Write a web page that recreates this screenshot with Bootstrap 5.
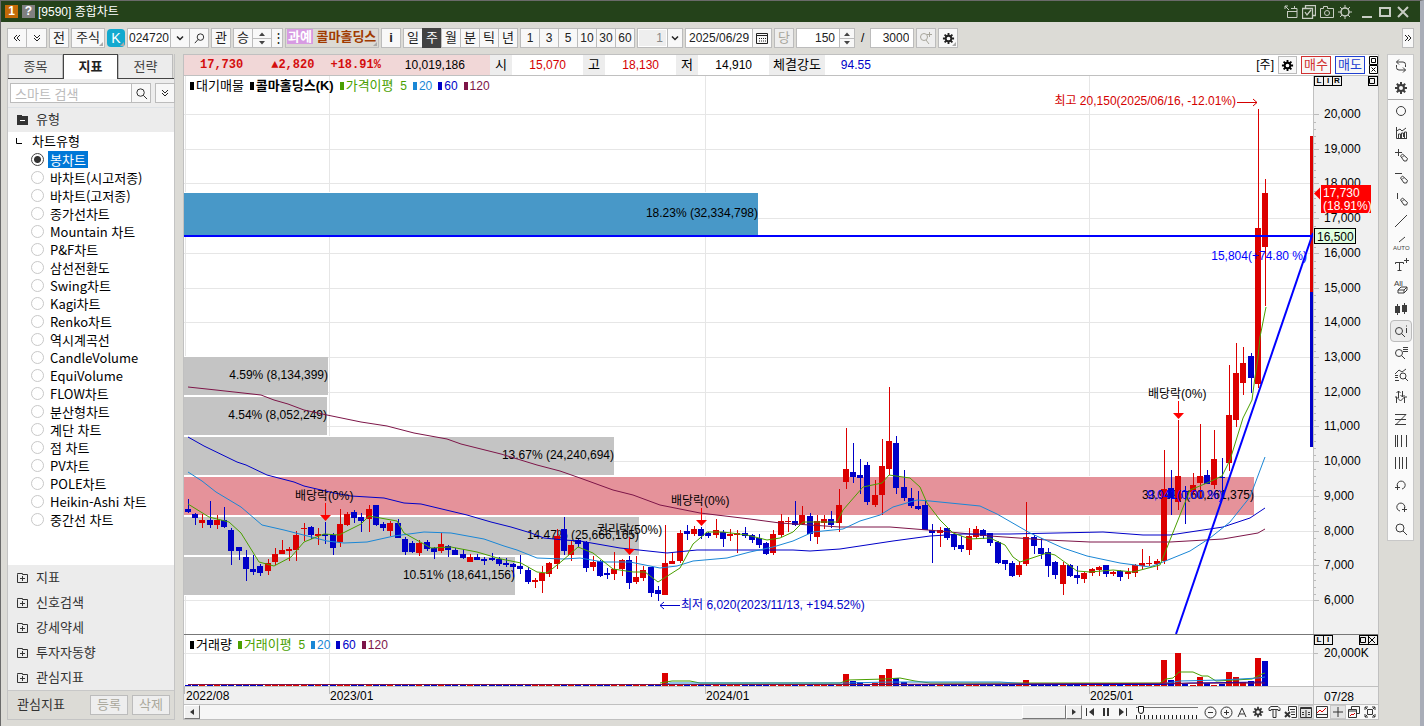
<!DOCTYPE html>
<html lang="ko">
<head>
<meta charset="utf-8">
<meta name="viewport" content="width=device-width, initial-scale=1">
<title>[9590] 종합차트</title>
<link href="https://cdn.jsdelivr.net/npm/bootstrap@5.3.0/dist/css/bootstrap.min.css" rel="stylesheet">
<style>
:root{--line:#bcbcbc;--face:#f8f8f8;--panel:#dcdbd6;--ink:#3c3c3c}
body{background:var(--panel);font:12px/18px "Liberation Sans","Noto Sans CJK KR",sans-serif;color:#000}
.app{min-height:100vh;border-left:1px solid #6a6a6a;border-top:1px solid #6a6a6a;border-right:4px solid #a9adb8;overflow:hidden}
svg{display:block;flex:none}
button{font:inherit;color:inherit}
.ico{fill:none;stroke:currentColor;stroke-width:1}
.solid{fill:currentColor;stroke:none}
.titlebar{height:21px;background:#24421a;color:#fff;font-size:12px;padding:0 8px 0 4px}
.titlebar .sq{width:13px;height:13px;background:#c46a08;font:bold 12px/13px "Liberation Sans",sans-serif;text-align:center}
.titlebar .sq.q{background:#808080}
.titlebar button{border:0;background:none;padding:0;color:#c8cdc4;width:18px;height:18px;display:grid;place-items:center}
.titlebar .ttl{margin-left:-1px}
.toolbar{height:32px;padding:0 6px;gap:2px}
.tb{height:20px;min-width:20px;padding:0;background:var(--face);border:1px solid var(--line);display:grid;place-items:center;font-size:13px;line-height:16px;position:relative;color:#222;white-space:nowrap}
.tb.dg{font-size:12px}
.join>*+*{margin-left:-1px}
.corner::after{content:"";position:absolute;right:1px;bottom:1px;border:2px solid transparent;border-right-color:#aaa;border-bottom-color:#aaa}
.tb.on{background:#424242;color:#fff;border-color:#424242}
.tb.off{background:#eee;color:#a8a69c}
.tb.w34{width:34px}.tb.w12{width:12px;min-width:12px}.tb.w16{width:16px;min-width:16px}.tb.w21{width:21px}
.num{height:20px;border:1px solid var(--line);background:#fff;padding:0 1px;font:12px/16px "Liberation Sans",sans-serif;color:#222;border-radius:0}
.num.a{width:44px}.num.b{width:68px;padding-left:3px}.num.c{width:31px;background:#eee;color:#888;box-shadow:inset 0 0 0 1px #fff}
.num.r{text-align:right;padding-right:4px}
.spin{width:16px;height:20px;border:1px solid var(--line);background:var(--face)}
.spin.wide{width:20px}
.spin button{border:0;background:none;height:9px;padding:0;display:grid;place-items:center;width:100%;color:#444}
.spin button+button{border-top:1px solid var(--line)}
.kbtn{width:18px;height:18px;border:0;border-radius:4px;background:#12a9cf;color:#fff;padding:0;font-size:14px;line-height:18px;position:relative}
.stock{width:94px;height:20px;border:1px solid var(--line);background:#dcdad4;padding:0 1px;color:#a03a00;font-weight:700;font-size:13px;line-height:16px;overflow:hidden;white-space:nowrap;position:relative}
.stock span{background:#d79be2;color:#fff;padding:0 1px}
.body{padding-left:6px}
.side{width:168px;background:#fff;border:1px solid #c4c4c4;border-top:0}
.tabsrow{height:25px;border-bottom:1px solid #444;background:var(--panel)}
.tabsrow button{width:55px;height:24px;border:1px solid var(--line);border-bottom:0;background:#ececec;color:#444;font-size:13px;padding:0}
.tabsrow button.act{background:#fff;border-color:#444;height:25px;font-weight:700;color:#222}
.find{padding:4px 2px;background:#ededed}
.find input{height:20px;border:1px solid var(--line);padding:0 4px;min-width:0;width:122px;font:13px "Noto Sans CJK KR",sans-serif}
.find input::placeholder{color:#bbb;opacity:1}
.grp{height:25px;background:#ececec;padding:0 9px;font-size:13px;color:#333;border:0;width:100%;text-align:left;gap:7px}
.tree{font-family:"Noto Sans CJK KR",sans-serif;height:433px;font-size:13px}
.tree .root{height:18px;padding-left:8px;gap:10px}
.tree .item{height:18px;padding-left:23px;gap:4px}
.tree input{appearance:none;width:13px;height:13px;margin:0;border:1px solid #c8c8c8;border-radius:50%;background:#fff}
.tree input:checked{border-color:#444;background:radial-gradient(#333 0 3px,#fff 4px)}
.tree label{padding:0 2px;line-height:17px;white-space:nowrap}
.tree input:checked+label{background:#0078d7;color:#fff}
.foot{height:29px;background:var(--panel);border-top:1px solid #c8c8c8;padding:0 4px 0 9px;font-size:13px;color:#333}
.foot button{width:38px;height:20px;border:1px solid var(--line);background:#eee;color:#aaa89c;padding:0;line-height:16px}
.main{min-width:0;border:1px solid #c0c0c0;border-bottom:0;background:#fff}
.quote{height:21px;border-bottom:1px solid #c0c0c0;font-size:12px;line-height:20px;white-space:nowrap}
.quote .pink{width:306px;background:#f1d7d7}
.boldnum{font:bold 12px/20px "Liberation Mono",monospace;color:#d40d0d}
.lab{background:#ededed;min-width:22px;padding:0 4px;font-size:13px;text-align:center}
.val{width:71px;text-align:right;padding-right:17px}
.red{color:#d40000}.blu{color:#0000c8}.grn{color:#4a9f00}.sky{color:#1a87d6}.wine{color:#7d1548}
.quote button{height:18px;border:1px solid var(--line);background:var(--face);padding:0 2px;font-size:13px;line-height:14px}
.quote .buy{color:#d03030;border-color:#d03030;width:30px}.quote .sell{color:#1f3fd0;border-color:#1f3fd0;width:30px}
.legend{top:0;left:6px;gap:6px;line-height:20px;white-space:nowrap;font-size:12px}
.legend b,.legend .ko{font-size:13px}
.legend i{display:inline-block;width:4px;height:8px;background:currentColor;margin-right:2px}
.axis{width:65px;background:#f0f0f0;border-left:1px solid #c0c0c0}
.plot{min-width:0}
.plot svg,.axis svg{width:100%}
.ph{height:558px}.vh{height:51px}
.volrow{border-top:1px solid #777}
.tiny{border:1px solid #000;background:#f0f0f0;width:10px;height:10px;padding:0;font:bold 8px/8px "Liberation Sans",sans-serif;display:grid;place-items:center}
.tiny+.tiny{margin-left:-1px}
.dates{height:18px;background:#f0f0f0;border-top:1px solid #c0c0c0}
.scroller{height:16px;border-top:1px solid #c0c0c0;border-bottom:1px solid #c0c0c0;background:#f8f8f8}
.scroller>button{width:16px;height:14px;border:0;background:none;padding:0;display:grid;place-items:center;color:#333}
.scroller>.bev,.thumb{background:#f0f0f0;border:1px solid #fff;border-right-color:#777;border-bottom-color:#777}
.thumb{width:44px;height:14px}
.scroller>.sel{background:#e4e4e4;box-shadow:inset 0 0 0 1px #c8c8c8}
.track{background:#f6f6f6}
.zoomer{width:62px;height:14px;margin:0 4px 0 6px;appearance:none;background:linear-gradient(#777,#777) 0 2px/100% 1px no-repeat,repeating-linear-gradient(90deg,#222 0 1px,transparent 1px 4px) 0 100%/100% 4px no-repeat}
.zoomer::-webkit-slider-thumb{appearance:none;width:6px;height:8px;background:#fff;border:1px solid #111;border-radius:0 0 3px 3px;margin-top:-5px}
.strip{width:27px;background:#fafafa;border:1px solid #c8c8c8;margin:0 6px 0 8px}
.strip button{width:22px;height:22px;border:1px solid transparent;border-radius:4px;background:none;padding:0;display:grid;place-items:center;color:var(--ink);margin:0 auto}
.strip .sel{background:#ececec;border-color:#bbb}
.strip hr{margin:0;border-color:#aaa;opacity:1;height:0;border-width:1px 0 0}
svg text{font-family:"Liberation Sans","Noto Sans CJK KR",sans-serif;font-size:12px}
.grid line{stroke:#e6e6e6}
</style>
</head>
<body>
<svg width="0" height="0" class="position-absolute" aria-hidden="true">
<defs>
<symbol id="gear" viewBox="0 0 14 14"><circle cx="7" cy="7" r="3" fill="none" stroke="currentColor" stroke-width="2"/><path d="M7 1v3M7 10v3M1 7h3M10 7h3M2.8 2.8l2 2M9.2 9.2l2 2M11.2 2.8l-2 2M4.8 9.2l-2 2" stroke="currentColor" stroke-width="2"/></symbol>
<symbol id="mag" viewBox="0 0 14 14"><g fill="none" stroke="currentColor"><circle cx="6" cy="6" r="4"/><path d="M9 9l4 4"/></g></symbol>
<symbol id="magr" viewBox="0 0 14 14"><g fill="none" stroke="currentColor"><circle cx="8" cy="5.500" r="3.500"/><path d="M5.500 8L2 12"/></g></symbol>
<symbol id="chev" viewBox="0 0 10 10"><path d="M2 3.500l3 3 3-3" fill="none" stroke="currentColor" stroke-width="1.500"/></symbol>
<symbol id="dchev" viewBox="0 0 10 10"><path d="M2 2l3 3 3-3M2 5l3 3 3-3" fill="none" stroke="currentColor"/></symbol>
<symbol id="dleft" viewBox="0 0 10 10"><path d="M5 2L2 5l3 3M8 2L5 5l3 3" fill="none" stroke="currentColor"/></symbol>
<symbol id="dright" viewBox="0 0 10 10"><path d="M2 2l3 3-3 3M5 2l3 3-3 3" fill="none" stroke="currentColor"/></symbol>
<symbol id="up" viewBox="0 0 6 4"><path d="M0 4l3-3.500L6 4z" fill="currentColor"/></symbol>
<symbol id="dn" viewBox="0 0 6 4"><path d="M0 0l3 3.500L6 0z" fill="currentColor"/></symbol>
<symbol id="plusf" viewBox="0 0 12 12"><path d="M.5 2.500v8h10v-8h-5v-1h-5zM3 6.500h5M5.500 4v5" fill="none" stroke="currentColor"/></symbol>
</defs>
</svg>

<div class="app d-flex flex-column">
<header class="titlebar d-flex align-items-center gap-1">
  <span class="sq">1</span><span class="sq q">?</span><span class="ttl">[9590] 종합차트</span>
  <div class="ms-auto d-flex">
    <button aria-label="분리"><svg class="ico" width="14" height="14"><path d="M1 1l4 4M1 4V1h3M7 3.500h6v9H3.500V6M3 6.500h10M10.500 1v3"/></svg></button>
    <button aria-label="복사"><svg class="ico" width="14" height="14"><path d="M3.500 3V.5h10v10H11M.5 3.500h10v10H.5zM3 7l2 3 4-5" stroke-width="1.300"/></svg></button>
    <button aria-label="캡처"><svg class="ico" width="14" height="14"><path d="M.5 3.500h3v-2h4v2h6v9H.5z"/><circle cx="7" cy="8" r="2.500"/></svg></button>
    <button aria-label="설정"><svg class="ico" width="14" height="14"><circle cx="7" cy="7" r="4" stroke-width="1.500"/><path d="M7 0v3M7 11v3M0 7h3M11 7h3M2 2l2 2M10 10l2 2M12 2l-2 2M4 10l-2 2"/></svg></button>
  </div>
  <div class="d-flex">
    <button aria-label="최소화"><svg class="ico" width="12" height="14"><path d="M1 12h10" stroke-width="2"/></svg></button>
    <button aria-label="최대화"><svg class="ico" width="12" height="12"><path d="M1 2h10v8H1z" stroke-width="2"/></svg></button>
    <button aria-label="닫기"><svg class="ico" width="12" height="12"><path d="M1 1l10 10M11 1L1 11" stroke-width="2"/></svg></button>
  </div>
</header>

<div class="toolbar d-flex align-items-center">
  <div class="d-flex join"><button class="tb" aria-label="접기"><svg width="10" height="10"><use href="#dleft"/></svg></button><button class="tb w21" aria-label="펼치기"><svg width="10" height="10"><use href="#dchev"/></svg></button></div>
  <button class="tb">전</button>
  <button class="tb w34 corner">주식</button>
  <button class="kbtn corner">K</button>
  <div class="d-flex join"><input class="num a" aria-label="종목코드" value="024720"><button class="tb" aria-label="목록"><svg width="10" height="10"><use href="#chev"/></svg></button><button class="tb" aria-label="종목검색"><svg width="13" height="13"><use href="#magr"/></svg></button></div>
  <button class="tb">관</button>
  <div class="d-flex join"><button class="tb">승</button><div class="spin wide"><button aria-label="이전"><svg width="6" height="4"><use href="#up"/></svg></button><button aria-label="다음"><svg width="6" height="4"><use href="#dn"/></svg></button></div><button class="tb w12" aria-label="더보기">⋮</button></div>
  <div class="stock corner"><span>과예</span> 콜마홀딩스</div>
  <button class="tb fw-bold">i</button>
  <div class="d-flex join"><button class="tb">일</button><button class="tb on">주</button><button class="tb">월</button><button class="tb">분</button><button class="tb">틱</button><button class="tb">년</button></div>
  <div class="d-flex join"><button class="tb dg">1</button><button class="tb dg">3</button><button class="tb dg">5</button><button class="tb dg">10</button><button class="tb dg">30</button><button class="tb dg">60</button></div>
  <div class="d-flex join"><input class="num c r" aria-label="주기" value="1"><button class="tb w16" aria-label="주기 목록"><svg width="10" height="10"><use href="#chev"/></svg></button></div>
  <div class="d-flex join"><input class="num b" aria-label="날짜" value="2025/06/29"><button class="tb" aria-label="달력"><svg class="ico" width="12" height="12"><path d="M.5 1.500h11v10H.5zM.5 3.500h11"/><path d="M3 6.500h7M3 9h7" stroke-dasharray="1 1"/></svg></button></div>
  <button class="tb off">당</button>
  <div class="d-flex join"><input class="num a r" aria-label="봉 개수" value="150"><div class="spin"><button aria-label="증가"><svg width="6" height="4"><use href="#up"/></svg></button><button aria-label="감소"><svg width="6" height="4"><use href="#dn"/></svg></button></div></div>
  <span class="px-1">/</span>
  <input class="num a r" aria-label="전체 개수" value="3000">
  <button class="tb off" aria-label="확대"><svg class="ico" width="14" height="14"><circle cx="5" cy="6" r="3.500"/><path d="M7 9l3 4M8 3.500h5M10.500 1v5"/></svg></button>
  <button class="tb corner" aria-label="차트 설정"><svg width="13" height="13"><use href="#gear"/></svg></button>
  <button class="tb w12 ms-auto" aria-label="더 펼치기"><svg width="10" height="10"><use href="#dright"/></svg></button>
</div>

<div class="body d-flex flex-fill pb-1">
<aside class="side d-flex flex-column flex-shrink-0 align-self-start">
  <div class="tabsrow d-flex"><button>종목</button><button class="act">지표</button><button>전략</button></div>
  <div class="find d-flex"><div class="d-flex join me-1"><input placeholder="스마트 검색" aria-label="스마트 검색"><button class="tb" aria-label="검색"><svg width="13" height="13"><use href="#mag"/></svg></button></div><button class="tb" aria-label="옵션"><svg width="10" height="10"><use href="#dchev"/></svg></button></div>
  <button class="grp border-top d-flex align-items-center"><svg width="12" height="12"><path d="M0 1h5v1h6v9H0z" fill="#333"/><path d="M3 6.500h5" stroke="#fff"/></svg>유형</button>
  <div class="tree" id="tree"><div class="root d-flex align-items-center"><svg class="ico" width="6" height="6"><path d="M.5 0v5.500H6"/></svg><span>차트유형</span></div></div>
  <button class="grp d-flex align-items-center"><svg width="12" height="12"><use href="#plusf"/></svg>지표</button>
  <button class="grp d-flex align-items-center"><svg width="12" height="12"><use href="#plusf"/></svg>신호검색</button>
  <button class="grp d-flex align-items-center"><svg width="12" height="12"><use href="#plusf"/></svg>강세약세</button>
  <button class="grp d-flex align-items-center"><svg width="12" height="12"><use href="#plusf"/></svg>투자자동향</button>
  <button class="grp d-flex align-items-center"><svg width="12" height="12"><use href="#plusf"/></svg>관심지표</button>
  <div class="foot d-flex align-items-center gap-1"><span class="me-auto">관심지표</span><button>등록</button><button>삭제</button></div>
</aside>

<main class="main flex-fill ms-2 align-self-start">
  <div class="quote d-flex">
    <div class="pink d-flex"><span class="boldnum ms-3">17,730</span><span class="boldnum ms-4 ps-1">▲2,820</span><span class="boldnum ms-3">+18.91%</span><span class="ms-4">10,019,186</span></div>
    <div class="lab">시</div><div class="val red">15,070</div><div class="lab">고</div><div class="val red">18,130</div><div class="lab">저</div><div class="val">14,910</div><div class="lab">체결강도</div><div class="blu ms-3">94.55</div>
    <div class="ms-auto d-flex align-items-center gap-1"><span>[주]</span><button aria-label="설정"><svg width="13" height="13"><use href="#gear"/></svg></button><button class="buy">매수</button><button class="sell">매도</button>
    <svg class="ico" width="9" height="18"><path d="M.5.5h8v8h-8zM2.500 2.500h4v4h-4zM.5 9.500h8v8h-8zM2.500 11.500l4 4M6.500 11.500l-4 4"/></svg></div>
  </div>

  <div class="d-flex">
    <div class="plot flex-fill position-relative">
      <div class="legend position-absolute d-flex"><span class="ko"><i></i>대기매물</span><b><i></i>콜마홀딩스(K)</b><span class="grn"><i></i><span class="ko">가격이평</span>&nbsp; 5</span><span class="sky"><i></i>20</span><span class="blu"><i></i>60</span><span class="wine"><i></i>120</span></div>
      <svg class="ph" role="img" aria-label="주가 차트"><g class="grid" id="pgrid" shape-rendering="crispEdges"></g><g id="price" transform="translate(-184 -76)"></g></svg>
    </div>
    <div class="axis position-relative">
      <div class="position-absolute top-0 start-0 end-0 d-flex"><button class="tiny">L</button><button class="tiny">I</button><button class="tiny">R</button><button class="tiny ms-auto" aria-label="최대화"><svg class="ico" width="6" height="6"><path d="M.5.5h5v5h-5z"/></svg></button></div>
      <svg class="ph"><g id="paxis" transform="translate(-1314 -76)"></g></svg>
    </div>
  </div>

  <div class="d-flex volrow">
    <div class="plot flex-fill position-relative">
      <div class="legend position-absolute d-flex"><span class="ko"><i></i>거래량</span><span class="grn"><i></i><span class="ko">거래이평</span>&nbsp; 5</span><span class="sky"><i></i>20</span><span class="blu"><i></i>60</span><span class="wine"><i></i>120</span></div>
      <svg class="vh" role="img" aria-label="거래량 차트"><g class="grid" shape-rendering="crispEdges"><line x1="0" x2="100%" y1="18.500" y2="18.500"/><path d="M1.500 0v51M145.500 0v51M521.500 0v51M905.500 0v51" stroke="#e6e6e6"/></g><g id="vol" transform="translate(-184 -635)"></g></svg>
    </div>
    <div class="axis position-relative">
      <div class="position-absolute top-0 start-0 end-0 d-flex"><button class="tiny">L</button><button class="tiny">I</button><button class="tiny ms-auto" aria-label="최대화"><svg class="ico" width="6" height="6"><path d="M.5.5h5v5h-5z"/></svg></button><button class="tiny" aria-label="닫기"><svg class="ico" width="6" height="6"><path d="M0 0l6 6M6 0L0 6"/></svg></button></div>
      <svg class="vh"><path d="M0 18.500h4" stroke="#bbb"/><text x="10" y="22">20,000K</text></svg>
    </div>
  </div>

  <div class="d-flex dates">
    <div class="plot flex-fill"><svg height="17"><path d="M.5 0v7M145.500 0v7M521.500 0v7M905.500 0v7" stroke="#bbb"/><text x="2" y="13">2022/08</text><text x="146" y="13">2023/01</text><text x="522" y="13">2024/01</text><text x="906" y="13">2025/01</text></svg></div>
    <div class="axis"><svg height="17"><text x="10" y="14">07/28</text></svg></div>
  </div>

  <div class="d-flex scroller">
    <button class="bev" aria-label="왼쪽으로"><svg class="solid" width="4" height="6"><path d="M4 0v6L0 3z"/></svg></button>
    <div class="track flex-fill d-flex justify-content-end"><div class="thumb"></div></div>
    <button class="bev" aria-label="오른쪽으로"><svg class="solid" width="4" height="6"><path d="M0 0v6l4-3z"/></svg></button>
    <button aria-label="처음"><svg class="solid" width="9" height="8"><path d="M0 0h1v8H0zM8 0v8L3 4z"/></svg></button>
    <button aria-label="멈춤"><svg class="solid" width="8" height="8"><path d="M1 0h2v8H1zM5 0h2v8H5z"/></svg></button>
    <button aria-label="끝"><svg class="solid" width="9" height="8"><path d="M8 0h1v8H8zM1 0v8l5-4z"/></svg></button>
    <input type="range" class="zoomer" min="0" max="100" value="4" aria-label="확대 비율">
    <button aria-label="축소"><svg class="ico" width="13" height="13"><circle cx="6.500" cy="6.500" r="5.500"/><path d="M4 6.500h5"/></svg></button>
    <button aria-label="확대"><svg class="ico" width="13" height="13"><circle cx="6.500" cy="6.500" r="5.500"/><path d="M4 6.500h5M6.500 4v5"/></svg></button>
    <button aria-label="글자"><svg class="ico" width="10" height="10"><path d="M1 10L5 1l4 9M2.500 7h5"/></svg></button>
    <button aria-label="설정"><svg width="12" height="12"><use href="#gear"/></svg></button>
    <button aria-label="도구"><svg class="ico" width="13" height="12"><path d="M1 4.500V2L3 .5h7l2 2v2h-2v-1H3v1zM5 4v7.500h3V4"/></svg></button>
    <button aria-label="내보내기"><svg class="ico" width="13" height="12"><path d="M4.500 5V.5h8v11h-5M6 3.500h5M7 6h4M7 8.500h4"/><path d="M1 6l5 5M6 6l-5 5" stroke-width="2"/></svg></button>
    <button class="sel" aria-label="데이터창"><svg class="ico" width="12" height="11"><path d="M.5 1.500h11M.5.5h11v10H.5zM6 3v7M2 5.500h2M2 7.500h2M8 5.500h2M8 7.500h2"/></svg></button>
    <button aria-label="차트"><svg class="ico" width="12" height="12"><path d="M.5.5h11v11H.5zM.5 8.500h11"/><path d="M1 7l3-3 2 2 4-4" stroke="#d00"/></svg></button>
    <button class="sel" aria-label="십자선"><svg class="ico" width="12" height="12"><path d="M1 6h10M6 1v10"/></svg></button>
    <button aria-label="새 창"><svg class="ico" width="12" height="12"><path d="M3.500 3V.5h8v7H9M.5 3.500h8v8h-8zM.5 5h8"/><path d="M2 10l2-2 1 1 2-2" stroke="#d00"/></svg></button>
    <button aria-label="전체화면"><svg class="ico" width="12" height="12"><path d="M3.500 3.500h5v5h-5zM1 4V1h3M8 1h3v3M11 8v3H8M4 11H1V8M1 1l2 2M11 1L9 3M11 11L9 9M1 11l2-2"/></svg></button>
  </div>
</main>

<nav class="strip flex-shrink-0 align-self-start" aria-label="그리기 도구" id="strip"></nav>
</div>
</div>

<script>
// Chart type list
const types=['봉차트','바차트(시고저종)','바차트(고저종)','종가선차트','Mountain 차트','P&F차트','삼선전환도','Swing차트','Kagi차트','Renko차트','역시계곡선','CandleVolume','EquiVolume','FLOW차트','분산형차트','계단 차트','점 차트','PV차트','POLE차트','Heikin-Ashi 차트','중간선 차트'];
document.getElementById('tree').insertAdjacentHTML('beforeend',types.map((t,i)=>`<div class="item d-flex align-items-center"><input type="radio" name="ctype" id="t${i}"${i?'':' checked'}><label for="t${i}">${t.replace('&','&amp;')}</label></div>`).join(''));

// Drawing tool strip
const pen='<path d="M6.500 8l2-2 5 4.500-1 2.500-2.500 0zM8 9.500l2-2"/>';
const tools=[
['연동','<path d="M5 .5L2.500 3 5 5.500M2.500 3H9q2.500 0 2.500 2.500V8M9 8.500L11.500 11 9 13.500M11.500 11H5q-2.500 0-2.500-2.500V6"/>'],
['설정','<use href="#gear"/>'],0,
['원','<circle cx="7" cy="7" r="4.500"/>'],
['지표','<path d="M2.500 1v11.500H13M2.500 5L6 3l2 2 4-3M4.500 12V8h2v4M7.500 12V7h2v4M10.500 12V6h2v6"/>'],
['추가','<path d="M1 4.500h7M4.500 1v7"/>'+pen],
['수평선','<path d="M1 3.500h7"/>'+pen],
['수직선','<path d="M3.500 1v6"/>'+pen],
['추세선','<path d="M1 13L13 1"/>'],
['자동추세','<path d="M5 6l6-5"/><text x="-1" y="14" fill="currentColor" stroke="none" style="font-size:6px">AUTO</text>'],
['문자','<path d="M1.500 6V4.500h8V6M5.500 4.500v8M3.500 12.500h4M10 2.500h5M12.500 0v5"/>'],
['전체삭제','<text x="0" y="6" fill="currentColor" stroke="none" style="font-size:8px">All</text><path d="M4 10l3-3h6l-3 3zM4 10v3h6v-3M13 7v3l-3 3"/>'],
['캔들','<path d="M3.500 2v11M10.500 1v11"/><path class="solid" d="M1 4h5v7H1zM8 3h5v7H8z"/>'],
['정보','<circle cx="5" cy="7" r="3.500"/><path d="M7.500 9.500L11 13M12.500 4v5M12.500 1.500v1"/>'],
['목록','<circle cx="5" cy="7" r="3.500"/><path d="M7.500 9.500L11 13M9 1.500h5M9 3.500h5M9 5.500h5"/>'],
['분석','<path d="M1 6l4-4 3 2 4-3M1 7.500h3M1 9.500h3M1 12.500h4"/><circle cx="9" cy="8" r="3"/><path d="M11 10l3 3"/>'],
['비교','<path d="M2.500 13V7l4 4 4-4v6M4.500 8V1M2.500 3l2-2 2 2M8.500 1v6M6.500 5l2 2 2-2M1 7h2M10 7h3"/>'],
['피보나치','<path d="M1 2.500h11M1 7.500h11M1 12.500h11M12 2.500L2 12.500"/>'],
['시간대','<path d="M1.500 1v12M3.500 1v12M7.500 1v12M12.500 1v12"/>'],
['등간격','<path d="M1.500 1v12M5.500 1v12M8.500 1v12M12.500 1v12"/>'],
['되돌리기','<path d="M4 9.500A4 4 0 1 1 8 11M1 9.500h5M3.500 7v5"/>'],
['다시하기','<path d="M10 9.500A4 4 0 1 0 6 11M8 9.500h5M10.500 7v5"/>'],
['돋보기','<use href="#mag"/>']];
document.getElementById('strip').innerHTML=tools.map(t=>t?`<button class="${t[0]=='정보'?'sel':''}" aria-label="${t[0]}"><svg class="ico" width="14" height="14" overflow="visible">${t[1]}</svg></button>`:'<hr>').join('');

// Weekly candles: colour, high, body top, body bottom, low
const C=`b499,509,512,513 b513,514,518,525 r514,520,523,528 b501,520,525,528 r515,520,525,529 b507,520,527,528 b528,530,551,565 b547,547,551,560 b550,557,569,581 b555,569,572,575
b564,566,573,576 r559,563,571,575 r548,554,562,565 r540,550,554,554 r547,549,551,561 r531,535,550,561 r523,528,529,541 b526,527,535,539 r528,534,536,545 b522,534,536,544
b533,535,548,555 r509,524,542,547 r512,514,525,526 b510,512,518,523 b513,517,521,532 r505,509,519,532 b505,505,525,526 b522,524,528,531 r521,523,531,536 b519,523,538,538
b537,539,552,555 b541,543,552,553 r540,543,553,556 b540,542,549,551 b547,548,552,559 r533,544,551,553 b545,546,550,557 b548,550,555,555 b549,554,558,559 r554,557,562,562
b554,557,560,560 b557,559,561,565 b553,558,560,561 b557,559,564,566 b558,563,565,567 b563,564,567,577 b555,566,569,574 b567,570,582,584 r578,580,582,588 r566,573,581,593
r562,563,574,577 r529,536,564,569 b517,529,551,555 r541,545,555,561 b539,540,544,547 b541,542,568,572 r556,562,567,571 b560,561,576,577 b568,573,575,579 r552,569,574,580
r559,560,569,576 b556,560,583,589 r556,577,582,584 r566,570,578,581 b567,567,593,597 b586,590,594,601 r525,563,595,595 r553,561,564,564 r530,533,561,563 b525,531,534,540
r526,529,534,536 b527,529,536,539 b532,533,536,538 r519,530,535,538 b530,532,539,547 r529,534,536,541 r530,533,535,553 b527,533,536,538 b534,535,540,543 b534,538,545,548
b542,543,554,555 r530,534,553,555 r514,521,535,537 r517,521,522,532 b501,521,525,526 r506,515,524,524 b513,516,534,541 r515,521,537,544 r515,519,523,529 b511,519,525,528
r489,505,523,532 r428,469,482,489 b443,472,477,483 b459,475,478,494 b462,465,502,505 r480,495,505,507 r439,466,495,515 r387,441,469,475 b436,443,488,494 b470,487,498,501
b488,498,506,508 b491,506,509,510 b501,505,530,530 b524,530,533,563 r527,530,533,547 b527,528,538,540 b534,534,547,550 b536,545,549,552 r528,536,550,555 r526,529,537,539
b529,530,536,539 b533,533,543,546 b541,542,563,564 b560,560,564,570 b561,563,576,577 r561,565,575,577 r502,537,564,566 b535,537,546,554 b538,548,554,559 b548,552,566,577
b561,562,575,579 r562,565,584,595 b564,565,576,577 b566,575,578,584 r572,573,579,583 r568,569,573,576 r566,567,570,576 b565,565,574,577 r571,572,574,576 b570,571,577,581
r568,572,574,579 r564,565,573,577 r549,563,566,569 r556,563,564,566 r559,561,564,570 r450,489,561,564 b470,488,498,515 r420,476,502,510 b486,491,492,524 r473,485,492,495
r424,476,483,498 b470,475,484,484 r430,459,485,489 b458,477,478,499 r365,415,463,471 r343,373,420,427 r347,363,383,395 b353,356,378,393 r109,228,384,388 r179,193,247,306`.split(/\s+/);
const X=i=>Math.round(188+7.228*i), col=c=>c=='r'?'#dc0000':'#0000c8';
const rect=(x,y,w,h,f)=>`<rect x="${x}" y="${y}" width="${w}" height="${h}" fill="${f}"/>`;
const poly=(p,c)=>`<polyline points="${p}" fill="none" stroke="${c}"/>`;
const txt=(x,y,s,f='#000',a='start')=>`<text x="${x}" y="${y}" fill="${f}" text-anchor="${a}">${s}</text>`;
let g='';
for(let p=6;p<=20;p++){const y=Math.round(600-(p-6)*34.71)-76+.5;g+=`<line x1="0" x2="100%" y1="${y}" y2="${y}"/>`}
for(const x of [1.5,145.5,521.5,905.5])g+=`<line x1="${x}" x2="${x}" y1="0" y2="558"/>`;
pgrid.innerHTML=g;

// Volume-at-price bands
const bands=[[193,43,574,'#4898c8','18.23% (32,334,798)'],[357,38,144,'#c4c4c4','4.59% (8,134,399)'],[397,38,143,'#c4c4c4','4.54% (8,052,249)'],[437,38,430,'#c4c4c4','13.67% (24,240,694)'],[477,38,1070,'#e5929a','33.99% (60,261,375)'],[517,38,455,'#c4c4c4','14.47% (25,666,165)'],[557,38,331,'#c4c4c4','10.51% (18,641,156)']];
let s='<g shape-rendering="crispEdges">';
for(const b of bands)s+=rect(184,b[0]-1,b[2],b[1]+2,'#fff')+rect(184,b[0],b[2],b[1],b[3]);
s+='</g>';
for(const b of bands)s+=txt(184+b[2],b[0]+(b[1]>40?24:22),b[4],'#000','end');
s+='<g shape-rendering="crispEdges">';
C.forEach((k,i)=>{const c=col(k[0]),[h,t,b,l]=k.slice(1).split(',').map(Number);s+=rect(X(i),h,1,l-h,c)+rect(X(i)-3,t,6,Math.max(1,b-t),c)});
s+=rect(1310,136,3,156,'#dc0000')+rect(1310,292,3,155,'#0000c8')+'</g>';
s+=poly('188,387 216,390 261,395 274,400 288,404 304,410 327,415 361,422 387,426 414,433 447,439 461,444 501,454 537,465 560,471 580,478 613,490 633,495 660,505 700,513 750,519 780,523 840,527 890,527 940,531 990,536 1047,540 1090,542 1170,542 1223,539 1258,533 1265,529','#7d1548');
s+=poly('188,437 204,446 237,462 246,465 267,475 294,482 304,486 334,493 351,496 384,498 404,503 421,504 467,515 491,522 511,527 531,533 544,538 564,540 580,541 620,548 667,553 697,550 793,550 810,551 840,549 893,541 930,536 963,534 1010,534 1103,532 1143,535 1170,535 1223,527 1250,518 1265,508','#0000c8');
s+=poly('188,472 202,481 216,492 241,507 262,525 284,530 327,541 344,543 367,542 394,536 424,532 451,533 484,539 504,546 517,550 537,558 564,559 580,558 603,562 630,562 660,568 677,566 693,561 727,558 750,552 773,547 793,541 813,532 843,529 860,521 880,515 893,507 917,500 930,501 980,506 997,514 1030,533 1063,548 1087,556 1120,563 1150,567 1163,562 1190,551 1210,538 1230,522 1250,497 1265,457','#1a87d6');
s+=poly('188,504 209,517 229,522 241,533 259,562 274,566 291,557 304,542 324,534 339,535 361,524 369,516 397,521 404,533 431,548 451,547 477,552 501,559 521,563 537,572 547,573 562,561 578,547 593,553 613,569 633,572 645,572 658,582 680,568 693,544 707,532 723,532 747,535 767,540 780,538 793,532 803,522 837,522 843,510 863,487 882,483 889,475 910,478 920,487 927,503 940,520 953,533 970,539 990,538 1005,545 1013,557 1020,562 1047,553 1055,555 1077,571 1090,572 1113,570 1133,572 1160,565 1170,540 1190,490 1207,483 1222,476 1230,460 1243,418 1252,400 1255,377 1258,357 1260,337 1266,307','#4a9f00');
s+='<path d="M184 236h1129" stroke="#00f" stroke-width="2"/><path d="M1313 233L1176 634" stroke="#00f" stroke-width="2"/>';
for(const [x,y] of [[325,503],[701,508],[629,537],[1178,401]])s+=`<path d="M${x+.5} ${y}v12" stroke="#f00"/><path d="M${x-5} ${y+12}h11l-5.500 6z" fill="#f00"/>`;
s+=txt(295,500,'배당락(0%)')+txt(671,505,'배당락(0%)')+txt(597,534,'권리락(50%)')+txt(1148,398,'배당락(0%)');
s+=txt(1236,105,'최고 20,150(2025/06/16, -12.01%)','#d40000','end')+'<path d="M1237 102.500h20M1253 99l4 3.500-4 3.500" fill="none" stroke="#d40000"/>';
s+=txt(681,609,'최저 6,020(2023/11/13, +194.52%)','#0000c8')+'<path d="M680 605.500h-20M664 602l-4 3.500 4 3.500" fill="none" stroke="#0000c8"/>';
s+=txt(1307,260,'15,804(+74.80 %)','#00f','end')+txt(1147,499,'9,041(0.00 %)','#00f');
price.innerHTML=s;

// Price axis
let a='';
for(let p=6;p<=20;p++){const y=Math.round(600-(p-6)*34.71)+.5;a+=`<path d="M1314 ${y}h5" stroke="#bbb"/>`+txt(1324,y+3.5,p+',000');for(let k=1;k<5&&p<20;k++)a+=`<path d="M1314 ${Math.round(y-k*6.94)+.5}h2" stroke="#bbb"/>`}
a+='<path d="M1314 193.500l6-6v12z" fill="#f00"/>'+rect(1321,185,50,28,'#f00')+txt(1323,197,'17,730','#fff')+txt(1323,210,'(18.91%)','#fff');
a+='<rect x="1314.500" y="228.500" width="41" height="15" fill="#e0ffe0" stroke="#000"/>'+txt(1317,241,'16,500');
paxis.innerHTML=a;

// Volume bars: top edge for the busy weeks, one low bar otherwise
const V={66:673,91:674,92:681,93:682,95:683,96:675,97:669,98:678,99:682,116:680,135:660,136:680,137:653,138:684,140:677,141:683,143:684,144:672,145:677,146:682,147:681,148:658,149:661};
let v='<g shape-rendering="crispEdges">';
C.forEach((k,i)=>{const t=V[i]||685;v+=rect(X(i)-3,t,6,686-t,col(i==149?'b':k[0]))});
v+='</g>';
v+=poly('660,683 672,681 690,681 700,683 840,683 848,680 885,679 900,678 915,681 930,683 1160,683 1166,679 1173,678 1179,672 1193,672 1202,676 1208,676 1216,681 1235,680 1252,679 1262,674 1265,673','#4a9f00');
v+=poly('188,684.500 665,684.500 670,683 845,683 890,682 1000,682 1030,684 1160,684 1180,681 1220,680 1240,679 1258,678 1265,677','#1a87d6');
v+=poly('188,684.500 840,684.500 1160,684.500 1190,683 1265,682','#0000c8')+poly('188,684.500 840,684.500 1265,683','#7d1548');
vol.innerHTML=v;
</script>
<script src="https://cdn.jsdelivr.net/npm/bootstrap@5.3.0/dist/js/bootstrap.bundle.min.js"></script>
</body>
</html>
